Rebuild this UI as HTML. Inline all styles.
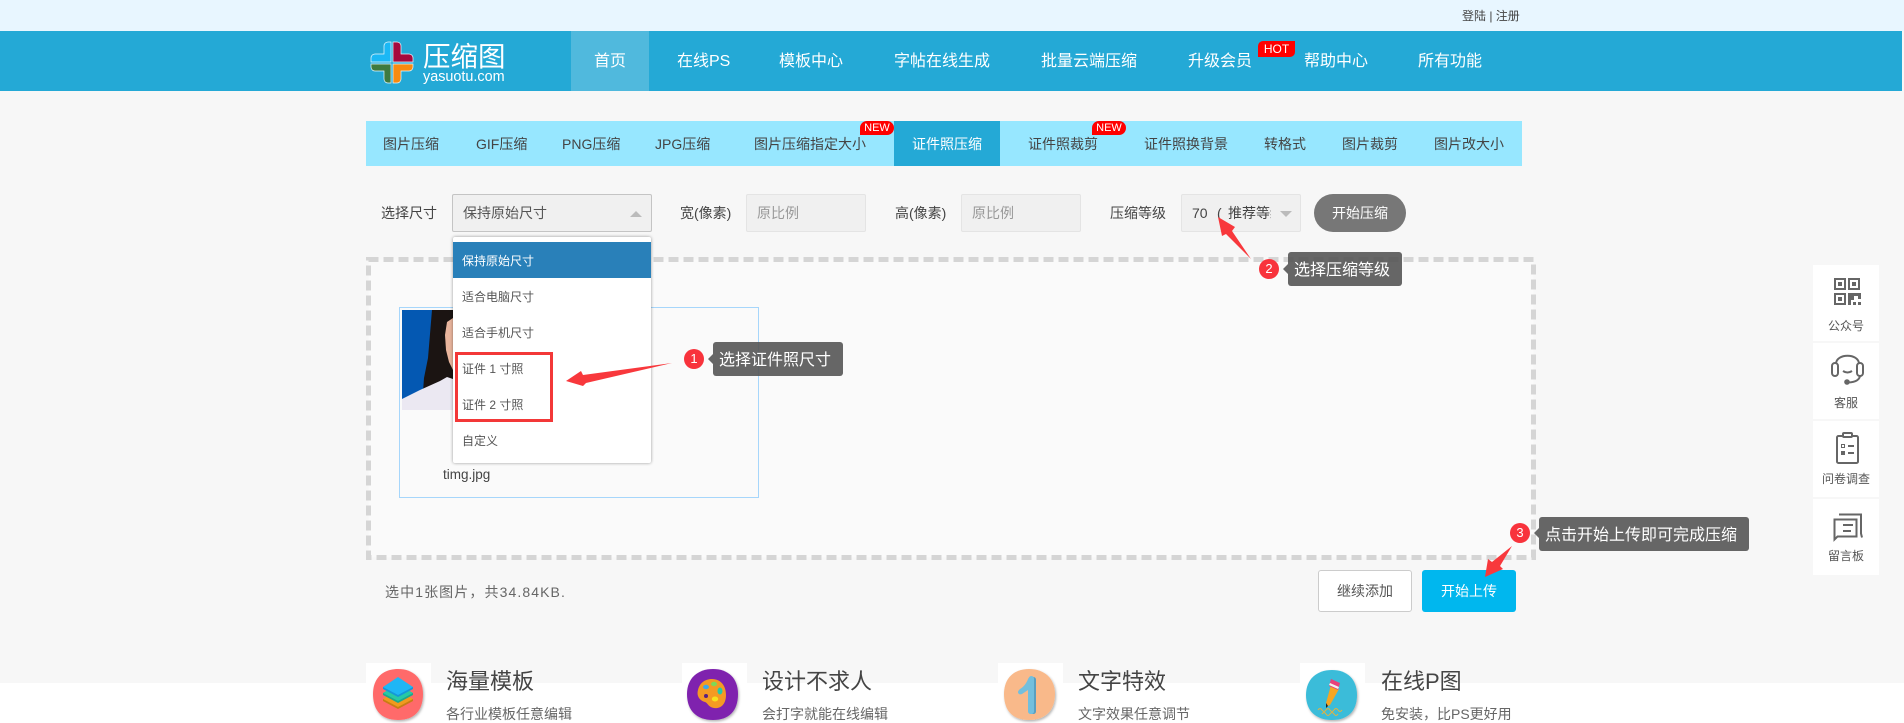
<!DOCTYPE html>
<html lang="zh"><head><meta charset="utf-8"><title>压缩图</title>
<style>
html,body{margin:0;padding:0;background:#fff}
#p{position:relative;width:1904px;height:723px;overflow:hidden;background:#fff;font-family:"Liberation Sans","Noto Sans CJK SC",sans-serif;color:#444}
#p div,#p span.t{position:absolute}
.t{position:absolute;white-space:nowrap;line-height:20px;height:20px;font-size:14px}
.n{color:#fff;font-size:16px;top:52px}
.s{top:134px;font-size:14px;color:#444}
.i{left:462px;font-size:12px;color:#555}
.tip{background:rgba(85,85,85,.9);border-radius:3px;height:34px}
.tip span{position:absolute;left:6px;top:8.5px;color:#fff;font-size:16px;line-height:20px;white-space:nowrap}
.b{width:20px;height:20px;border-radius:50%;background:#f8333c;color:#fff;font-size:13px;line-height:20px;text-align:center}
.card{left:1813px;width:66px;background:#fff}
.lab{left:0;width:66px;text-align:center;font-size:12px;color:#555;line-height:16px}
.h{font-size:22px;color:#444;top:668px;line-height:28px;height:28px}
.d{font-size:14px;color:#666;top:704px}
.w{background:#fff;top:663px;height:60px}
</style></head><body><div id="p">
<div style="left:0;top:0;width:1904px;height:683px;background:#f7f7f7"></div>
<div style="left:0;top:0;width:1904px;height:31px;background:#e8f6ff"></div>
<span class="t" style="left:1462px;top:6px;font-size:12px;color:#444">登陆 | 注册</span>
<div style="left:0;top:31px;width:1902px;height:60px;background:#24a9d6"></div>
<svg style="position:absolute;left:0;top:0" width="1904" height="100">
<g stroke="#e8f8ff" stroke-width=".7">
<path fill="#1bb8f5" d="M391 42h-3a4 4 0 0 0-4 4v8h-9a4 4 0 0 0-4 4v4h20z"/>
<path fill="#a6093d" d="M393 42h4a4 4 0 0 1 4 4v8h8a4 4 0 0 1 4 4v4h-20z"/>
<path fill="#3e7a3f" d="M391 83h-3a4 4 0 0 1-4-4v-8h-9a4 4 0 0 1-4-4v-3h20z"/>
<path fill="#f88a10" d="M393 83h4a4 4 0 0 0 4-4v-8h8a4 4 0 0 0 4-4v-3h-20z"/>
</g></svg>
<span class="t" style="left:423px;top:42px;font-size:27.5px;line-height:30px;height:30px;color:#fff">压缩图</span>
<span class="t" style="left:423px;top:67px;font-size:14.4px;color:#fff">yasuotu.com</span>
<div style="left:571px;top:31px;width:78px;height:60px;background:#50b9dd"></div>
<span class="t n" style="left:594px">首页</span>
<span class="t n" style="left:677px">在线PS</span>
<span class="t n" style="left:779px">模板中心</span>
<span class="t n" style="left:894px">字帖在线生成</span>
<span class="t n" style="left:1041px">批量云端压缩</span>
<span class="t n" style="left:1188px">升级会员</span>
<div style="left:1258px;top:41px;width:37px;height:16px;background:#f00;border-radius:5px 0 5px 0;color:#fff;font-size:12px;line-height:16px;text-align:center">HOT</div>
<span class="t n" style="left:1304px">帮助中心</span>
<span class="t n" style="left:1418px">所有功能</span>

<div style="left:366px;top:121px;width:1156px;height:45px;background:#97e7ff"></div>
<div style="left:894px;top:121px;width:106px;height:45px;background:#24a9d6"></div>
<span class="t s" style="left:383px">图片压缩</span>
<span class="t s" style="left:476px">GIF压缩</span>
<span class="t s" style="left:562px">PNG压缩</span>
<span class="t s" style="left:655px">JPG压缩</span>
<span class="t s" style="left:754px">图片压缩指定大小</span>
<span class="t s" style="left:912px;color:#fff">证件照压缩</span>
<span class="t s" style="left:1028px">证件照裁剪</span>
<span class="t s" style="left:1144px">证件照换背景</span>
<span class="t s" style="left:1264px">转格式</span>
<span class="t s" style="left:1342px">图片裁剪</span>
<span class="t s" style="left:1434px">图片改大小</span>
<div style="left:860px;top:121px;width:34px;height:14px;background:#f00;border-radius:7px 7px 7px 0;color:#fff;font-size:11px;line-height:14px;text-align:center">NEW</div>
<div style="left:1092px;top:121px;width:34px;height:14px;background:#f00;border-radius:7px 7px 7px 0;color:#fff;font-size:11px;line-height:14px;text-align:center">NEW</div>

<span class="t" style="left:381px;top:203px;color:#444">选择尺寸</span>
<div style="left:452px;top:194px;width:198px;height:36px;background:#f0f0f0;border:1px solid #c4c4c4;border-radius:2px"></div>
<span class="t" style="left:463px;top:203px;color:#555">保持原始尺寸</span>
<svg style="position:absolute;left:625px;top:206px" width="22" height="14"><path d="M5 11L11 5L17 11z" fill="#bbb"/></svg>
<span class="t" style="left:680px;top:203px;color:#444">宽(像素)</span>
<div style="left:746px;top:194px;width:118px;height:36px;background:#f0f0f0;border:1px solid #e4e4e4;border-radius:2px"></div>
<span class="t" style="left:757px;top:203px;color:#999">原比例</span>
<span class="t" style="left:895px;top:203px;color:#444">高(像素)</span>
<div style="left:961px;top:194px;width:118px;height:36px;background:#f0f0f0;border:1px solid #e4e4e4;border-radius:2px"></div>
<span class="t" style="left:972px;top:203px;color:#999">原比例</span>
<span class="t" style="left:1110px;top:203px;color:#444">压缩等级</span>
<div style="left:1181px;top:194px;width:118px;height:36px;background:#f0f0f0;border:1px solid #e4e4e4;border-radius:2px"></div>
<span class="t" style="left:1192px;top:203px;color:#444">70</span>
<span class="t" style="left:1217px;top:203px;color:#444">(</span>
<span class="t" style="left:1228px;top:203px;color:#444;width:43px;overflow:hidden">推荐等级</span>
<svg style="position:absolute;left:1275px;top:206px" width="22" height="14"><path d="M5 5L11 11L17 5z" fill="#bbb"/></svg>
<div style="left:1314px;top:194px;width:92px;height:38px;background:#777;border-radius:19px;color:#fff;font-size:14px;line-height:38px;text-align:center">开始压缩</div>

<svg style="position:absolute;left:0;top:0" width="1904" height="723">
<rect x="368.5" y="259.5" width="1165" height="298" fill="#fafafa" stroke="#d5d5d5" stroke-width="5" stroke-dasharray="10 5"/>
<rect x="399.5" y="307.5" width="359" height="190" fill="#fafafa" stroke="#a6d6fb"/>
<rect x="402" y="310" width="51" height="100" fill="#0458b2"/>
<path d="M432 310h21v72l-16 6-14 4 1-14 4-20 2-24z" fill="#1b1412"/>
<path d="M453 318l-6 4-2 13 1 15 3 12 4 8z" fill="#e9b59d"/>
<path d="M402 399l18-9 20-9 7-4 6 2v31h-51z" fill="#ebe8f2"/>
</svg>
<span class="t" style="left:443px;top:465px;font-size:13.5px;color:#444">timg.jpg</span>

<div style="left:453px;top:237px;width:198px;height:226px;background:#fff;border-radius:2px;box-shadow:0 0 3px rgba(0,0,0,.4)"></div>
<div style="left:453px;top:242px;width:198px;height:36px;background:#2980b9"></div>
<span class="t i" style="top:251px;color:#fff">保持原始尺寸</span>
<span class="t i" style="top:287px">适合电脑尺寸</span>
<span class="t i" style="top:323px">适合手机尺寸</span>
<span class="t i" style="top:359px">证件 1 寸照</span>
<span class="t i" style="top:395px">证件 2 寸照</span>
<span class="t i" style="top:431px">自定义</span>
<div style="left:455px;top:352px;width:92px;height:64px;border:3px solid #f33838"></div>

<span class="t" style="left:385px;top:582px;font-size:14px;letter-spacing:1.1px;color:#666">选中1张图片，共34.84KB.</span>
<div style="left:1318px;top:570px;width:92px;height:40px;background:#fff;border:1px solid #ccc;border-radius:3px;color:#555;font-size:14px;line-height:40px;text-align:center">继续添加</div>
<div style="left:1422px;top:570px;width:94px;height:42px;background:#00b7ee;border-radius:3px;color:#fff;font-size:14px;line-height:42px;text-align:center">开始上传</div>

<div class="tip" style="left:713px;top:342px;width:130px"><span>选择证件照尺寸</span></div>
<div class="tip" style="left:1288px;top:252px;width:114px"><span>选择压缩等级</span></div>
<div class="tip" style="left:1539px;top:517px;width:210px"><span>点击开始上传即可完成压缩</span></div>
<div class="b" style="left:684px;top:349px">1</div>
<div class="b" style="left:1259px;top:259px">2</div>
<div class="b" style="left:1510px;top:523px">3</div>
<svg style="position:absolute;left:0;top:0" width="1904" height="723">
<path fill="#666" d="M713 354l-5 5 5 5zM1288 264l-5 5 5 5zM1539 528l-5 5 5 5z"/>
<path fill="#f8383c" d="M566 381L581 371L583 375L672 363L586 383L583 386z"/>
<path fill="#f8383c" d="M1218 217L1235 227L1232 231L1251 259L1226 234L1222 236z"/>
<path fill="#f8383c" d="M1512 546L1500 566L1503 569L1485 577L1488 559L1492 562z"/>
</svg>

<div class="card" style="top:265px;height:76px"><span class="t lab" style="top:53px;height:16px">公众号</span></div>
<div class="card" style="top:343px;height:76px"><span class="t lab" style="top:52px;height:16px">客服</span></div>
<div class="card" style="top:421px;height:76px"><span class="t lab" style="top:50px;height:16px">问卷调查</span></div>
<div class="card" style="top:499px;height:76px"><span class="t lab" style="top:49px;height:16px">留言板</span></div>
<svg style="position:absolute;left:0;top:0" width="1904" height="723" fill="none" stroke="#666">
<g stroke-width="2">
<rect x="1835" y="279" width="10" height="10"/><rect x="1849" y="279" width="10" height="10"/><rect x="1835" y="294" width="10" height="10"/>
</g>
<g fill="#666" stroke="none">
<rect x="1838" y="282" width="4" height="4"/><rect x="1852" y="282" width="4" height="4"/><rect x="1838" y="297" width="4" height="4"/>
<path d="M1848 293h3v12h-3zM1851 293h7v3h-4v4h-3zM1858 293h3v6h-3zM1853 302h3v3h-3zM1858 302h3v3h-3z"/>
</g>
<g stroke-width="2">
<path d="M1836 364C1836 353 1859 353 1859 364"/>
<rect x="1832" y="363" width="6" height="13" rx="3"/><rect x="1857" y="363" width="6" height="13" rx="3"/>
<path d="M1843 371q4.5 3 9 0"/><path d="M1860 376q-1 6-12 6.5"/>
</g>
<circle cx="1847" cy="382" r="2.8" fill="#666" stroke="none"/>
<g stroke-width="2">
<rect x="1837" y="436" width="21" height="27" rx="1.5"/>
<rect x="1843" y="433" width="9" height="4" rx="1" fill="#fff"/>
<path d="M1848 446h6M1848 453h6"/>
<rect x="1841.5" y="444.5" width="3" height="3" stroke-width="1"/>
</g>
<rect x="1841" y="451" width="4" height="4" fill="#666" stroke="none"/>
<g stroke-width="2">
<path d="M1834.5 519.5h22v17h-19l-3 3z"/>
<path d="M1839 514.5h22v19l1 4"/>
<path d="M1843 525h10M1843 531h8"/>
</g>
</svg>

<div class="w" style="left:366px;width:65px"></div>
<div class="w" style="left:682px;width:65px"></div>
<div class="w" style="left:998px;width:65px"></div>
<div class="w" style="left:1300px;width:65px"></div>
<svg style="position:absolute;left:0;top:0" width="1904" height="723">
<defs><filter id="sh" x="-20%" y="-20%" width="140%" height="140%"><feDropShadow dx="1" dy="1.5" stdDeviation="1.2" flood-opacity=".3"/></filter></defs>
<path filter="url(#sh)" fill="#ff6b6b" d="M398 669c15 0 25 9 25 25c0 17-9 26-25 26c-16 0-25-9-25-26c0-16 10-25 25-25z"/>
<path fill="#c87c14" d="M383 699v2l15 8 15-8v-2z"/>
<path fill="#f09a1e" d="M398 689l15 10-15 8-15-8z"/>
<path fill="#1ea88a" d="M383 693v2l15 8 15-8v-2z"/>
<path fill="#27c9a6" d="M398 684l15 9-15 8-15-8z"/>
<path fill="#1597d8" d="M383 687v2l15 8 15-8v-2z"/>
<path fill="#1fb6f5" d="M398 677l15 10-15 8-15-8z"/>
<path filter="url(#sh)" fill="#7f22ae" d="M713 669c15 0 25 9 25 25c0 17-9 26-25 26c-16 0-26-9-26-26c0-16 11-25 26-25z"/>
<path fill="#f59a23" d="M698 690c2-8 8-11 14-11c9 0 14 7 14 16c0 9-5 14-12 13c-6-1-6-5-9-6c-4-1-9-5-7-12z"/>
<ellipse cx="706" cy="687" rx="3" ry="2.2" fill="#3fa9e8"/><ellipse cx="714" cy="684" rx="3" ry="2.2" fill="#7ed957"/><ellipse cx="720" cy="691" rx="2.5" ry="3.5" fill="#27c9a6"/><ellipse cx="715" cy="699" rx="3.2" ry="2.5" fill="#f7e11f"/><circle cx="706" cy="696" r="2" fill="#5a2080"/>
<path filter="url(#sh)" fill="#f9b98a" d="M1029 669c15 0 26 9 26 25c0 17-10 26-26 26c-16 0-25-9-25-26c0-16 10-25 25-25z"/>
<path fill="#5a9fc0" d="M1033 677c2 0 3 1 3 3v31c0 2-1 3-3 3c-3 0-3-1-3-3z"/>
<path fill="#73bfdd" d="M1031 676c2 0 3 1 3 3v32c0 2-1 3-3 3c-2 0-3-1-3-3v-21l-6 4c-2 1-4 0-4-2c0-1 1-2 2-3c4-2 7-7 8-10c1-2 2-3 3-3z"/>
<path filter="url(#sh)" fill="#3bbcd9" d="M1332 670c15 0 25 9 25 25c0 16-9 25-25 25c-16 0-26-9-26-25c0-16 11-25 26-25z"/>
<path fill="#f5a623" d="M1331 685l8 4-9 16-2 1-2-3z"/>
<path fill="#e8407a" d="M1331 679l9 4-2 7-9-4z"/><path fill="#f0f0f0" d="M1330 683l9 4-1 2-9-4z"/>
<path fill="#222" d="M1326 703l2 3-2 2z"/>
<path fill="none" stroke="#e8b23a" d="M1318 710q2-3 4 0t4 0t4 0t4 0t4 0t4 0M1322 714q2-3 4 0t4 0t4 0t4 0"/>
</svg>
<span class="t h" style="left:446px">海量模板</span>
<span class="t d" style="left:446px">各行业模板任意编辑</span>
<span class="t h" style="left:762px">设计不求人</span>
<span class="t d" style="left:762px">会打字就能在线编辑</span>
<span class="t h" style="left:1078px">文字特效</span>
<span class="t d" style="left:1078px">文字效果任意调节</span>
<span class="t h" style="left:1381px">在线P图</span>
<span class="t d" style="left:1381px">免安装，比PS更好用</span>
</div></body></html>
